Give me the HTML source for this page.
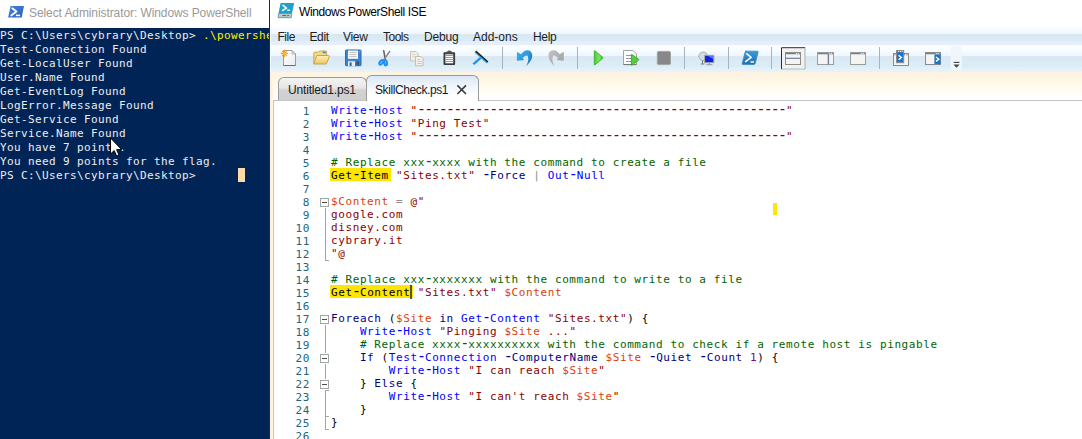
<!DOCTYPE html>
<html><head><meta charset="utf-8"><title>Windows PowerShell ISE</title>
<style>
html,body{margin:0;padding:0;}
body{width:1082px;height:439px;overflow:hidden;background:#fff;position:relative;font-family:"Liberation Sans",sans-serif;font-size:12px;}
.abs{position:absolute;}
/* ---------- console window ---------- */
#con{left:0;top:0;width:269px;height:439px;overflow:hidden;background:#012456;}
#con .title{left:0;top:0;width:269px;height:28px;background:#fff;}
#con .title span{position:absolute;left:29px;top:6px;line-height:14px;color:#999;white-space:nowrap;letter-spacing:-0.09px;}
#con pre{position:absolute;left:0;top:29px;margin:0;font-family:"DejaVu Sans Mono","Liberation Mono",monospace;font-size:11px;letter-spacing:0.377px;line-height:14px;color:#eeedf0;white-space:pre;}
#con pre i{font-style:normal;color:#f9f100;}
#con .cur{left:238px;top:168px;width:7px;height:14px;background:#fedba9;}
#sep{left:269px;top:0;width:1px;height:439px;background:#2b2b2b;}
/* ---------- ISE window ---------- */
#ise{left:270px;top:0;width:812px;height:439px;overflow:hidden;background:#fff;}
#ise .tbar{left:0;top:0;width:812px;height:27px;background:#fff;}
#ise .tbar span{position:absolute;left:29px;top:5px;line-height:14px;color:#000;white-space:nowrap;letter-spacing:-0.38px;}
#menu{left:0;top:27px;width:812px;height:19px;background:linear-gradient(#f8fbff 0,#fcffff 1px,#f8fbff 3px,#eef5fd 6.9px,#d9e8f3 7px,#d9e9f4 10px,#daecf5 13.9px,#e4ecfb 14px,#e6effc 17.5px,#f6fdff 18.5px,#f8feff 19px);}
#menu span{position:absolute;top:3px;line-height:14px;color:#1e1e1e;white-space:nowrap;}
#tool{left:0;top:46px;width:812px;height:26px;background:linear-gradient(#f9feff 0,#fbffff 1px,#eef6fe 9.9px,#d9e8f3 10px,#d9e8f4 14.5px,#daedf5 15px,#daedf5 20.5px,#e4ecfb 21px,#e7f3fd 26px);}
#tabs{left:0;top:72px;width:812px;height:28px;background:linear-gradient(#fdf3e1 0,#fef6e4 7px,#fffaea 14px,#fffef8 23px,#fff 24px);}
#leftstrip{left:0;top:72px;width:3.4px;height:367px;background:linear-gradient(90deg,#fdeed4,#fff6e6);}
#edborder{left:3px;top:100px;width:809px;height:339px;border-left:1px solid #c3c8cc;border-top:1px solid #c1c4c2;box-sizing:border-box;background:#fff;}
.tab{position:absolute;box-sizing:border-box;border:1px solid #9a9a9a;border-bottom:none;border-radius:6px 6px 0 0;white-space:nowrap;color:#1a1a1a;}
#tab1{left:8px;top:77px;width:89px;height:23px;background:linear-gradient(#f4f4f4,#e6e6e6 45%,#d2d2d2 55%,#cfcfcf);}
#tab1 span{position:absolute;left:9px;top:5px;line-height:14px;letter-spacing:-0.17px;}
#tab2{left:96px;top:75px;width:113px;height:26px;background:linear-gradient(#dbe8f6,#f3f8fd 50%,#fff 80%);}
#tab2 span{position:absolute;left:8px;top:7px;line-height:14px;letter-spacing:-0.4px;}
/* ---------- editor ---------- */
#code,#nums{position:absolute;margin:0;font-family:"DejaVu Sans Mono","Liberation Mono",monospace;font-size:11px;letter-spacing:0.6px;line-height:13px;white-space:pre;}
#nums{left:10px;top:105px;width:30px;text-align:right;color:#21667a;}
#code{left:61px;top:104px;color:#000;}
.c{color:#0000ff}.s{color:#8b0000}.g{color:#006400}.v{color:#dc3f05}.k{color:#00008b}.p{color:#000080}.o{color:#8c8c8c}.n{color:#800080}.h{color:#000}
.d{font-size:15px;letter-spacing:-1.81px;line-height:0;margin-left:-0.7px;margin-right:0.7px;}
.hl{position:absolute;background:#ffe600;height:12.4px;}
.fl{position:absolute;background:#a3a7a3;}
.fb{position:absolute;box-sizing:border-box;width:9px;height:9px;border:1px solid #a3a7a3;background:#fff;}
.fb:after{content:"";position:absolute;left:1px;top:3px;width:5px;height:1px;background:#4c4c4c;}
</style></head>
<body>
<div id="con" class="abs">
  <pre>PS C:\Users\cybrary\Desktop&gt; <i>.\powershell_check.ps1</i>
Test-Connection Found
Get-LocalUser Found
User.Name Found
Get-EventLog Found
LogError.Message Found
Get-Service Found
Service.Name Found
You have 7 points.
You need 9 points for the flag.
PS C:\Users\cybrary\Desktop&gt; </pre>
  <div class="abs cur"></div>
  <div class="abs title"><span>Select Administrator: Windows PowerShell</span><svg class="abs" style="left:0;top:0" width="40" height="28" viewBox="0 0 40 28"><defs><linearGradient id="gC" x1="0" y1="0" x2="1" y2="1"><stop offset="0" stop-color="#4583e0"/><stop offset="1" stop-color="#2a5fc4"/></linearGradient></defs><path d="M10.6,6h13.4l-2.3,11.6h-13.6z" fill="url(#gC)"/><path d="M12.3,8.3l4.2,3.2l-5.3,4" fill="none" stroke="#fff" stroke-width="1.7" stroke-linecap="round" stroke-linejoin="round"/><path d="M15.9,15.4h4.2" stroke="#fff" stroke-width="1.6"/></svg></div>
  <svg class="abs" style="left:108px;top:135px" width="18" height="24" viewBox="108 135 18 24"><path d="M110.5,138v16l3.7,-3.5l2.5,5.6l2.3,-1l-2.4,-5.5h5.1z" fill="#fff" stroke="#000" stroke-width="1" stroke-linejoin="miter"/></svg>
</div>
<div id="sep" class="abs"></div>
<div id="ise" class="abs">
  <div class="abs tbar"><span>Windows PowerShell ISE</span><svg class="abs" style="left:0;top:0" width="30" height="27" viewBox="270 0 30 27"><path d="M280.6,3h13.6l-2.3,10.4h-13.4z" fill="#1fa2c8"/><path d="M278.5,13.4h13.4l-0.7,4.3h-13.1z" fill="#b9cdd2" stroke="#5f8890" stroke-width="0.8"/><path d="M282.4,15.6h3.6" stroke="#3f5a60" stroke-width="1"/><path d="M287.4,14.7l2.2,0.9l-2.2,0.9z" fill="#3f5a60"/><path d="M283,5.3l3.5,2.9l-4,2.3" fill="none" stroke="#fff" stroke-width="1.5" stroke-linejoin="round" stroke-linecap="round"/><path d="M287.2,10.2h2.8" stroke="#fff" stroke-width="1.3"/></svg></div>
  <div id="menu" class="abs">
    <span style="left:7.5px;letter-spacing:-0.5px">File</span>
    <span style="left:39.5px;letter-spacing:-0.4px">Edit</span>
    <span style="left:73px;letter-spacing:-0.3px">View</span>
    <span style="left:113px;letter-spacing:-0.5px">Tools</span>
    <span style="left:154px;letter-spacing:-0.2px">Debug</span>
    <span style="left:203px">Add-ons</span>
    <span style="left:263px;letter-spacing:-0.3px">Help</span>
  </div>
  <div id="tool" class="abs"></div>
<!--ICONS-->
<svg id="tbicons" class="abs" style="left:0;top:46px" width="812" height="26" viewBox="270 46 812 26">
<defs>
<linearGradient id="gPage" x1="0" y1="0" x2="1" y2="1"><stop offset="0" stop-color="#ffffff"/><stop offset="1" stop-color="#ececec"/></linearGradient>
<linearGradient id="gFold" x1="0" y1="0" x2="0" y2="1"><stop offset="0" stop-color="#fdf0b8"/><stop offset="1" stop-color="#eec65a"/></linearGradient>
<linearGradient id="gUndo" x1="0" y1="0" x2="1" y2="1"><stop offset="0" stop-color="#42b8f4"/><stop offset="1" stop-color="#1470c0"/></linearGradient>
<linearGradient id="gRedo" x1="1" y1="0" x2="0" y2="1"><stop offset="0" stop-color="#c4c4c4"/><stop offset="1" stop-color="#9c9c9c"/></linearGradient>
<linearGradient id="gRun" x1="0" y1="0" x2="1" y2="0"><stop offset="0" stop-color="#42c82c"/><stop offset="0.5" stop-color="#7fe26a"/><stop offset="1" stop-color="#3cc026"/></linearGradient>
<linearGradient id="gPS" x1="0" y1="0" x2="0" y2="1"><stop offset="0" stop-color="#3a9ad6"/><stop offset="1" stop-color="#1f6fb0"/></linearGradient>
</defs>
<!-- separators -->
<g stroke="#a9b3be" stroke-width="1">
<path d="M502.5,47v22M577.5,47v22M684.5,47v22M728.5,47v22M771.5,47v22M879.5,47v22"/>
</g>
<!-- new -->
<path d="M283.5,50.5h8.5l3.5,3.5v11.5h-12z" fill="url(#gPage)" stroke="#9c9c9c"/>
<path d="M283.5,65.5h12" stroke="#6e6e6e"/>
<path d="M292,50.5v3.5h3.5z" fill="#e4e4e4" stroke="#a8a8a8" stroke-width="0.8"/>
<g stroke="#f5a21c" stroke-width="1.2" stroke-linecap="round"><path d="M281.2,53.4h6.4M284.4,50.2v6.4M282.2,51.2l4.4,4.4M286.6,51.2l-4.4,4.4"/></g>
<circle cx="284.4" cy="53.4" r="1.6" fill="#f9b63a"/>
<!-- open -->
<path d="M313.8,63.5v-10.3q0,-1 1,-1h3.6l1,-1.2h6.2q1,0 1,1v4" fill="#f3d98a" stroke="#c9a84e"/>
<rect x="322.8" y="51.6" width="3" height="1.6" fill="#3b80e0"/>
<path d="M313.6,64l2.9,-7.8q0.3,-0.7 1,-0.7h11q1,0 0.7,1l-2.5,6.8q-0.3,0.7 -1,0.7z" fill="url(#gFold)" stroke="#c9a446"/>
<!-- save -->
<rect x="345.5" y="50" width="15.5" height="15.7" rx="0.8" fill="#3f84cb" stroke="#2c69ad"/>
<rect x="348" y="50.5" width="10" height="8.3" fill="#f8f8f8"/>
<path d="M349.5,52.5h7M349.5,54.5h7M349.5,56.5h7" stroke="#bdbdbd" stroke-width="0.9"/>
<rect x="348" y="61.2" width="7" height="4.8" fill="#ececec"/>
<rect x="349.6" y="62.4" width="2" height="3.6" fill="#2c62a6"/>
<rect x="356.4" y="61.3" width="2.6" height="3.6" fill="#245a9c"/>
<rect x="359.4" y="51" width="0.9" height="1.3" fill="#9fc3e8"/>
<!-- cut -->
<path d="M383.6,50.2l1.9,10.3" stroke="#5e5e5e" stroke-width="1.5"/>
<path d="M390,51l-6.8,9.6" stroke="#8a8a8a" stroke-width="1.5"/>
<ellipse cx="381.3" cy="62.3" rx="1.5" ry="2.7" transform="rotate(38 381.3 62.3)" fill="#7cc4fb" stroke="#1e8ff5" stroke-width="1.9"/>
<ellipse cx="385.6" cy="62.8" rx="1.4" ry="2.7" transform="rotate(-8 385.6 62.8)" fill="#7cc4fb" stroke="#1e8ff5" stroke-width="1.9"/>
<!-- copy (disabled) -->
<path d="M410.5,51.5h5.5l2,2v7.5h-7.5z" fill="#efeee9" stroke="#c5c2b7"/>
<path d="M412.5,54.5h2.5M412.5,56.5h2" stroke="#cfcdc5" stroke-width="0.9"/>
<path d="M415.5,56.5h5.5l2,2v7.3h-7.5z" fill="#f1f0ec" stroke="#c2bfb3"/>
<path d="M417.5,59.5h2.5M417.5,61.5h4M417.5,63.5h4" stroke="#c4c2ba" stroke-width="0.9"/>
<!-- paste -->
<rect x="443.5" y="52.3" width="11.6" height="12.7" rx="1" fill="#3b3b3b"/>
<rect x="445.4" y="54.3" width="7.8" height="9" fill="#fafafa"/>
<path d="M445.4,55.5h7.8M445.4,57.5h7.8M445.4,59.5h7.8M445.4,61.5h7.8" stroke="#9c9c9c" stroke-width="1"/>
<rect x="446.6" y="51.3" width="5.4" height="2.6" rx="0.6" fill="#4a4a4a"/>
<rect x="448" y="50.6" width="2.6" height="1.4" fill="#555"/>
<!-- clear -->
<path d="M474.9,52l12.2,10.9" stroke="#35b4f2" stroke-width="1.6"/>
<path d="M475.7,51.1l12.2,10.9" stroke="#1a1a1a" stroke-width="1.5"/>
<path d="M480.6,57.8l-7.2,6.4" stroke="#1d8fe6" stroke-width="2.3"/>
<path d="M479.7,57l-7.2,6.4" stroke="#7fd0fa" stroke-width="0.8"/>
<!-- undo / redo -->
<path d="M516.9,51.8L516.9,60.7L524.1,60L522.6,58C524.5,56 526.5,55 527.4,55.8C529,58 528.5,62 526.1,66C530,62.5 532.8,58.5 532.2,54.5C531.8,51.5 529.5,50 526.6,50.2C524,50.4 522.5,52.5 521.1,54.3Z" fill="url(#gUndo)"/>
<path transform="translate(1080.7 0) scale(-1 1)" d="M516.9,51.8L516.9,60.7L524.1,60L522.6,58C524.5,56 526.5,55 527.4,55.8C529,58 528.5,62 526.1,66C530,62.5 532.8,58.5 532.2,54.5C531.8,51.5 529.5,50 526.6,50.2C524,50.4 522.5,52.5 521.1,54.3Z" fill="url(#gRedo)"/>
<!-- run -->
<path d="M594.3,51.2v13.3q0,0.8 0.7,0.3l7.9,-6.6q0.5,-0.4 0,-0.8l-7.9,-6.5q-0.7,-0.5 -0.7,0.3z" fill="url(#gRun)" stroke="#36b522" stroke-width="0.9"/>
<!-- run selection -->
<path d="M623.5,50.5h9.5l3.5,3.5v10.5h-13z" fill="#fdfdfd" stroke="#a4a4a4"/>
<path d="M623.5,64.6h13" stroke="#777"/>
<path d="M626,55.5h6M626,58.5h6M626,61.5h6" stroke="#8f93b8" stroke-width="1"/>
<path d="M631.4,54.8v10q0,0.8 0.6,0.3l6.6,-5q0.5,-0.4 0,-0.8l-6.6,-4.8q-0.6,-0.5 -0.6,0.3z" fill="#52cf3c" stroke="#2fae1c" stroke-width="0.9"/>
<!-- stop -->
<rect x="657.3" y="51.4" width="13.2" height="13.2" rx="1.4" fill="#888888" stroke="#a3a3a3"/>
<!-- remote -->
<circle cx="703.2" cy="56.3" r="4.3" fill="#d3dde3" stroke="#a3adb3" stroke-width="1"/>
<path d="M702.5,60.5v3.3M700.8,64h3.6" stroke="#6d7f8c" stroke-width="1"/>
<rect x="704.6" y="55.3" width="9.2" height="7.4" fill="#0c22e4" stroke="#a8a8a0" stroke-width="1"/>
<path d="M708,56l5,0l0,3z" fill="#6f86ff" opacity="0.8"/>
<path d="M709.2,63v1.4M706.2,64.7h6.2" stroke="#9a9a96" stroke-width="1"/>
<!-- powershell -->
<path d="M745.4,51.2h12q1,0 0.7,1l-2.9,11.3q-0.3,1 -1.3,1h-11q-1,0 -0.7,-1l2.9,-11.3q0.3,-1 1.3,-1z" fill="url(#gPS)" stroke="#3f8fc4" stroke-width="0.9"/>
<path d="M746.8,53.8l4.4,3.6l-5.6,4.2" fill="none" stroke="#fff" stroke-width="1.5" stroke-linejoin="round" stroke-linecap="round"/>
<path d="M750.6,62h3.4" stroke="#fff" stroke-width="1.5"/>
<!-- selected button frame -->
<rect x="781.5" y="47.7" width="23.5" height="21.3" fill="#f2f2f0"/>
<path d="M781.5,69.2v-21.5h23.7" fill="none" stroke="#2e2e2e" stroke-width="1"/>
<path d="M805,48v21h-23.3" fill="none" stroke="#b9b9b9" stroke-width="1.2"/>
<!-- layout icons -->
<g fill="#f4f4f2" stroke="#8b8b8b" stroke-width="1">
<rect x="785.5" y="52.5" width="15" height="12"/>
<rect x="817.5" y="52.5" width="16" height="12" stroke="#9c9c9c"/>
<rect x="850.5" y="52.5" width="15" height="12" stroke="#9c9c9c"/>
<rect x="893.5" y="53.5" width="15" height="12"/>
<rect x="925.5" y="52.5" width="15" height="12"/>
</g>
<g stroke="#6f7d9c" stroke-width="1.2">
<path d="M786,53.6h14M818,53.6h15M851,53.6h14M926,53.6h14"/>
<path d="M786,58.3h14"/>
<path d="M828.4,54v10.5" stroke-width="1.4"/>
</g>
<g fill="#fff"><rect x="795.8" y="53" width="1" height="1"/><rect x="797.8" y="53" width="1" height="1"/><rect x="828.8" y="53" width="1" height="1"/><rect x="830.8" y="53" width="1" height="1"/><rect x="860.8" y="53" width="1" height="1"/><rect x="862.8" y="53" width="1" height="1"/><rect x="935.8" y="53" width="1" height="1"/><rect x="937.8" y="53" width="1" height="1"/></g>
<!-- script pane icons -->
<path d="M894,54.6h14" stroke="#6f7d9c" stroke-width="1.2"/>
<rect x="896.5" y="50.5" width="7.2" height="12.2" fill="#1f74c8" stroke="#8b8b8b"/>
<path d="M897,51.6h6.2" stroke="#6f7d9c" stroke-width="1.2"/>
<g fill="#fff"><rect x="898.3" y="51" width="1" height="1"/><rect x="900" y="51" width="1" height="1"/><rect x="901.7" y="51" width="1" height="1"/><rect x="905" y="54" width="1" height="1"/><rect x="906.6" y="54" width="1" height="1"/><rect x="894.6" y="54" width="1" height="1"/></g>
<path d="M898.6,55.3l2.8,2.2l-2.8,2.2" fill="none" stroke="#fff" stroke-width="1.4"/>
<rect x="934.4" y="54.4" width="6.1" height="9.8" fill="#1f74c8"/>
<path d="M936,57l2.8,2.2l-2.8,2.2" fill="none" stroke="#fff" stroke-width="1.4"/>
<!-- overflow -->
<rect x="950.6" y="46" width="11.2" height="24.4" rx="2" fill="#f1f6fc"/>
<path d="M953.6,62.4h5.8" stroke="#444" stroke-width="1.1"/>
<path d="M953.4,64.6h6.2l-3.1,3.2z" fill="#444"/>
</svg>
<!--/ICONS-->
  <div id="tabs" class="abs"></div>
  <div class="abs" style="left:0;top:27px;width:1.4px;height:45px;background:#f6fafe"></div>
  <div id="leftstrip" class="abs"></div>
  <div id="edborder" class="abs"></div>
  <div id="tab1" class="tab"><span>Untitled1.ps1</span></div>
  <div id="tab2" class="tab"><span>SkillCheck.ps1</span><svg style="position:absolute;left:89px;top:8px" width="12" height="12" viewBox="0 0 12 12"><path d="M1.4,1.4l8.6,8.6M10,1.4l-8.6,8.6" stroke="#3c3c3c" stroke-width="1.6"/></svg></div>
<div class="hl" style="left:60px;top:168.4px;width:61px"></div>
<div class="hl" style="left:60px;top:285.4px;width:82.8px"></div>
<div class="abs" style="left:503px;top:203px;width:4px;height:12px;background:#ffe600"></div>
<div class="fl" style="left:55px;top:208px;width:1px;height:53px"></div><div class="fl" style="left:55px;top:260px;width:4px;height:1px"></div>
<div class="fl" style="left:55px;top:325px;width:1px;height:28px"></div>
<div class="fl" style="left:55px;top:364px;width:1px;height:15px"></div>
<div class="fl" style="left:55px;top:390px;width:1px;height:40px"></div>
<div class="fl" style="left:55px;top:390px;width:4px;height:1px"></div><div class="fl" style="left:55px;top:416px;width:4px;height:1px"></div><div class="fl" style="left:55px;top:429px;width:4px;height:1px"></div>
<div class="fb" style="left:50px;top:198px"></div><div class="fb" style="left:50px;top:315px"></div><div class="fb" style="left:50px;top:354px"></div><div class="fb" style="left:50px;top:380px"></div>
<pre id="nums">1
2
3
4
5
6
7
8
9
10
11
12
13
14
15
16
17
18
19
20
21
22
23
24
25
26</pre>
<pre id="code"><span class="c">Write<span class="d">-</span>Host</span> <span class="s">"<span class="d">---------------------------------------------------</span>"</span>
<span class="c">Write<span class="d">-</span>Host</span> <span class="s">"Ping Test"</span>
<span class="c">Write<span class="d">-</span>Host</span> <span class="s">"<span class="d">---------------------------------------------------</span>"</span>

<span class="g"># Replace xxx<span class="d">-</span>xxxx with the command to create a file</span>
<span class="h">Get<span class="d">-</span>Item</span> <span class="s">"Sites.txt"</span> <span class="p"><span class="d">-</span>Force</span> <span class="o">|</span> <span class="c">Out<span class="d">-</span>Null</span>

<span class="v">$Content</span> <span class="o">=</span> <span class="s">@"</span>
<span class="s">google.com</span>
<span class="s">disney.com</span>
<span class="s">cybrary.it</span>
<span class="s">"@</span>

<span class="g"># Replace xxx<span class="d">-</span>xxxxxxx with the command to write to a file</span>
<span class="h">Get<span class="d">-</span>Content</span> <span class="s">"Sites.txt"</span> <span class="v">$Content</span>

<span class="k">Foreach</span> (<span class="v">$Site</span> <span class="k">in</span> <span class="c">Get<span class="d">-</span>Content</span> <span class="s">"Sites.txt"</span>) {
    <span class="c">Write<span class="d">-</span>Host</span> <span class="s">"Pinging </span><span class="v">$Site</span><span class="s"> ..."</span>
    <span class="g"># Replace xxxx<span class="d">-</span>xxxxxxxxxx with the command to check if a remote host is pingable</span>
    <span class="k">If</span> (<span class="c">Test<span class="d">-</span>Connection</span> <span class="p"><span class="d">-</span>ComputerName</span> <span class="v">$Site</span> <span class="p"><span class="d">-</span>Quiet</span> <span class="p"><span class="d">-</span>Count</span> <span class="n">1</span>) {
        <span class="c">Write<span class="d">-</span>Host</span> <span class="s">"I can reach </span><span class="v">$Site</span><span class="s">"</span>
    } <span class="k">Else</span> {
        <span class="c">Write<span class="d">-</span>Host</span> <span class="s">"I can't reach </span><span class="v">$Site</span><span class="s">"</span>
    }
}
</pre>
<div class="abs" style="left:140.2px;top:285px;width:1.5px;height:13.5px;background:rgba(50,50,50,0.8)"></div>
</div>
</body></html>
